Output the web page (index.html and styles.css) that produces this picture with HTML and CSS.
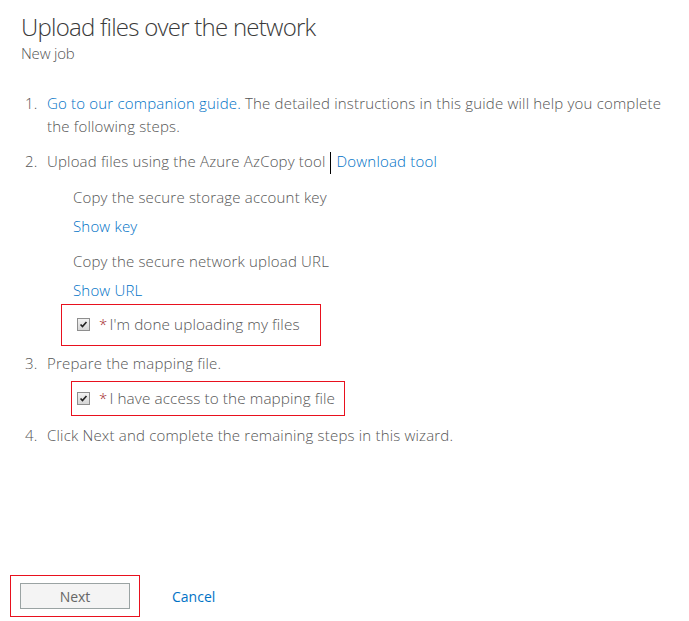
FILE: index.html
```html
<!DOCTYPE html>
<html lang="en">
<head>
<meta charset="utf-8">
<title>Upload files over the network</title>
<link rel="stylesheet" href="styles.css">
</head>
<body>
<div class="page">
  <header class="head">
    <h1 class="title">Upload files over the network</h1>
    <div class="subtitle">New job</div>
  </header>
  <ol class="steps">
    <li class="step">
      <span class="num">1.</span>
      <div class="content"><a class="link" href="#">Go to our companion guide.</a> The detailed instructions in this guide will help you complete<br>the following steps.</div>
    </li>
    <li class="step step-2">
      <span class="num">2.</span>
      <div class="content">
        <div>Upload files using the Azure AzCopy tool<span class="bar"></span><a class="link" href="#">Download tool</a></div>
        <div class="sub">
          <div class="sub-text">Copy the secure storage account key</div>
          <div class="sub-link"><a class="link" href="#">Show key</a></div>
          <div class="sub-text">Copy the secure network upload URL</div>
          <div class="sub-link"><a class="link" href="#">Show URL</a></div>
          <div class="confirm confirm-a">
            <span class="check"><svg viewBox="0 0 13 13" width="13" height="13"><path d="M3 6.5 L5.3 9 L10 3.6" fill="none" stroke="#222" stroke-width="1.9"/></svg></span>
            <span class="req">*</span><span class="confirm-label">I'm done uploading my files</span>
          </div>
        </div>
      </div>
    </li>
    <li class="step step-3">
      <span class="num">3.</span>
      <div class="content">
        <div>Prepare the mapping file.</div>
        <div class="sub">
          <div class="confirm confirm-b">
            <span class="check"><svg viewBox="0 0 13 13" width="13" height="13"><path d="M3 6.5 L5.3 9 L10 3.6" fill="none" stroke="#222" stroke-width="1.9"/></svg></span>
            <span class="req">*</span><span class="confirm-label">I have access to the mapping file</span>
          </div>
        </div>
      </div>
    </li>
    <li class="step">
      <span class="num">4.</span>
      <div class="content">Click Next and complete the remaining steps in this wizard.</div>
    </li>
  </ol>
  <footer class="footer">
    <div class="next-wrap"><button class="btn" type="button">Next</button></div>
    <a class="link cancel" href="#">Cancel</a>
  </footer>
</div>
</body>
</html>
```
FILE: styles.css
```css
* { box-sizing: border-box; }
html, body { margin: 0; padding: 0; }
body {
  font-family: "Open Sans", "Noto Sans", sans-serif;
  font-size: 15px;
  font-weight: 300;
  color: #555;
  background: #fff;
}
.page {
  min-height: 100vh;
  display: flex;
  flex-direction: column;
  padding: 11px 0 4px 21px;
}
.title {
  margin: 0;
  font-size: 24px;
  font-weight: 300;
  line-height: 32px;
  color: #3a3a3a;
  letter-spacing: -0.75px;
}
.subtitle {
  font-size: 15px;
  line-height: 20px;
  color: #555;
  letter-spacing: -0.2px;
}
.steps {
  list-style: none;
  margin: 29px 0 0 0;
  padding: 0;
  letter-spacing: 0.18px;
}
.step {
  display: flex;
  line-height: 23px;
  margin-bottom: 12px;
}
.step-2 { margin-bottom: 6px; }
.step-3 { margin-bottom: 8px; }
.num {
  flex: none;
  width: 26px;
  padding-left: 4px;
}
.content { flex: 1; }
.link {
  color: #0072c6;
  text-decoration: none;
}
.bar {
  display: inline-block;
  width: 0;
  height: 22px;
  border-left: 1.5px solid #000;
  vertical-align: middle;
  margin: 0 6px 0 4px;
}
.sub { margin-left: 26px; }
.sub-text { margin-top: 12px; }
.sub-link { margin-top: 6px; }
.confirm {
  display: inline-flex;
  align-items: center;
  border: 1px solid #e8111e;
}
.confirm-a {
  margin: 2px 0 0 -12px;
  height: 42px;
  padding: 0 20px 0 15px;
}
.confirm-b {
  margin: 6px 0 0 -2px;
  height: 35px;
  padding: 0 9px 0 5px;
}
.check {
  display: inline-flex;
  width: 13px;
  height: 13px;
  border: 1px solid #8e8e8e;
  background: linear-gradient(#f2f2f2, #d6d6d6);
  margin-right: 9px;
  align-items: center;
  justify-content: center;
}
.check svg { display: block; width: 11px; height: 11px; }
.req {
  color: #a4262c;
  margin-right: 2px;
}
.confirm-label { color: #555; font-size: 15.3px; letter-spacing: 0.1px; }
.footer {
  margin-top: auto;
  display: flex;
  align-items: center;
}
.next-wrap {
  margin-left: -11px;
  padding: 7px 9px;
  border: 1px solid #e8111e;
}
.btn {
  display: block;
  width: 110px;
  height: 26px;
  padding: 0;
  background: #f4f4f4;
  border: 1px solid #9aa3a3;
  font-family: inherit;
  font-weight: 400;
  font-size: 14px;
  color: #666;
}
.cancel {
  margin-left: 32px;
  font-size: 14px;
  font-weight: 400;
}
```
